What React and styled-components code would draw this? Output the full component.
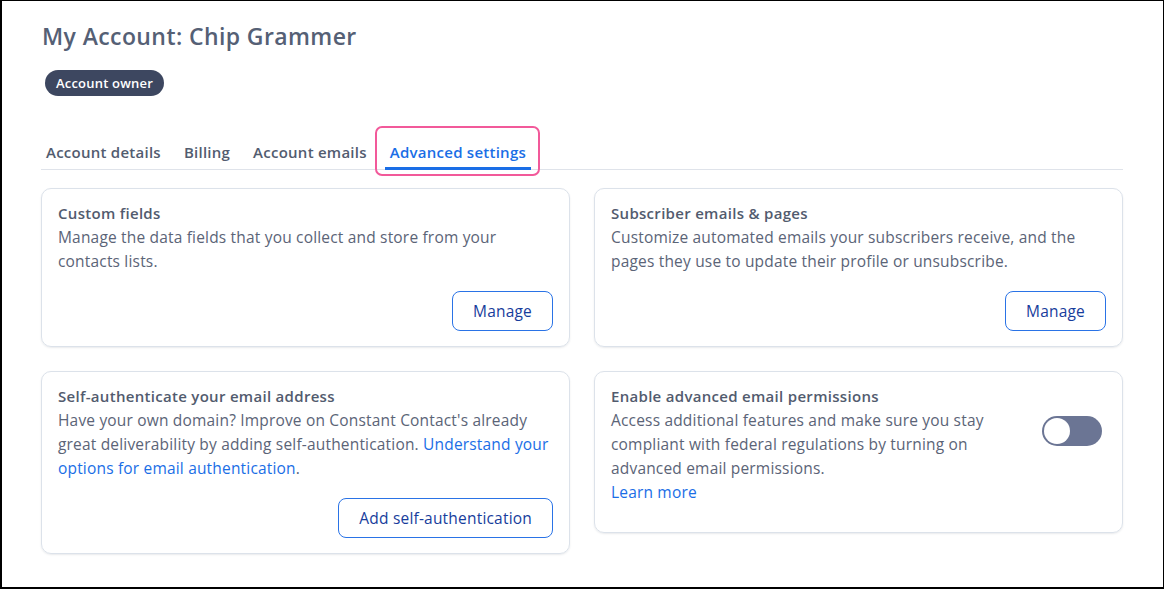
import React from 'react'
import styled, { createGlobalStyle } from 'styled-components'

const GlobalStyle = createGlobalStyle`
  html, body {
    margin: 0;
    padding: 0;
    background: #ffffff;
  }
  body {
    font-family: "Open Sans", "Liberation Sans", sans-serif;
  }
  * {
    box-sizing: border-box;
  }
`;

const Frame = styled.div`
  width: 1164px;
  height: 589px;
  border-top: 1px solid #000;
  border-left: 2px solid #000;
  border-right: 1px solid #000;
  border-bottom: 2px solid #000;
  padding: 20px 40px 0 39px;
  background: #fff;
`;

const Title = styled.h1`
  margin: 0;
  font-size: 23px;
  line-height: 30px;
  font-weight: 600;
  letter-spacing: 0.4px;
  color: #556075;
  padding-left: 1px;
`;

const Badge = styled.span`
  display: inline-flex;
  align-items: center;
  height: 26px;
  margin: 19px 0 0 4px;
  padding: 0 11px;
  border-radius: 13px;
  background: #3d4760;
  color: #fff;
  font-size: 13px;
  font-weight: 600;
  letter-spacing: 0.2px;
`;

const TabBar = styled.div`
  display: flex;
  gap: 13px;
  margin-top: 38px;
  box-shadow: inset 0 -1px 0 #dfe3ea;
`;

const Tab = styled.div`
  position: relative;
  padding: 8px 5px 5px;
  line-height: 20px;
  font-size: 15px;
  font-weight: 600;
  letter-spacing: 0.25px;
  color: ${p => (p.$active ? '#1a6ee6' : '#525c6f')};
  border-bottom: 3px solid ${p => (p.$active ? '#1a6ee6' : 'transparent')};
`;

const Highlight = styled.span`
  position: absolute;
  left: -10px;
  right: -9px;
  top: -8px;
  bottom: -9px;
  border: 2px solid #f2599a;
  border-radius: 7px;
  pointer-events: none;
`;

const Grid = styled.div`
  display: grid;
  grid-template-columns: 1fr 1fr;
  gap: 24px;
  margin-top: 18px;
  align-items: start;
`;

const Card = styled.div`
  border: 1px solid #dce2ea;
  border-radius: 10px;
  box-shadow: 0 1px 2px rgba(40, 50, 70, 0.1);
  padding: 12px 16px ${p => p.$padBottom || 15}px;
  display: flex;
  flex-direction: column;
`;

const CardRow = styled.div`
  display: flex;
  justify-content: space-between;
  align-items: flex-start;
`;

const TextCol = styled.div`
  width: ${p => p.$width || 'auto'};
`;

const CardTitle = styled.div`
  font-size: 15px;
  line-height: 24px;
  font-weight: 600;
  letter-spacing: 0.3px;
  color: #525b6e;
`;

const CardText = styled.p`
  margin: 0;
  font-size: 15.5px;
  line-height: 24px;
  letter-spacing: 0.18px;
  color: #5b6477;
`;

const InlineLink = styled.a`
  color: #1a6ee6;
  text-decoration: none;
`;

const BlockLink = styled.a`
  display: block;
  color: #1a6ee6;
  text-decoration: none;
  font-size: 15.5px;
  line-height: 24px;
  letter-spacing: 0.18px;
`;

const Actions = styled.div`
  display: flex;
  justify-content: flex-end;
  margin-top: 18px;
`;

const OutlineButton = styled.button`
  height: 40px;
  padding: 0 20px;
  border: 1px solid #2a73e6;
  border-radius: 8px;
  background: #fff;
  color: #173d9c;
  font-family: "Open Sans", "Liberation Sans", sans-serif;
  font-size: 15.5px;
  font-weight: 500;
  letter-spacing: 0.2px;
`;

const Toggle = styled.div`
  position: relative;
  width: 60px;
  height: 30px;
  margin: 32px 4px 0 0;
  border-radius: 15px;
  background: #6b7594;
  flex-shrink: 0;
`;

const Knob = styled.span`
  position: absolute;
  left: 2px;
  top: 2px;
  width: 26px;
  height: 26px;
  border-radius: 50%;
  background: #fff;
`;

export default function App() {
  return (
    <>
      <GlobalStyle />
      <Frame>
        <Title>My Account: Chip Grammer</Title>
        <Badge>Account owner</Badge>

        <TabBar>
          <Tab>Account details</Tab>
          <Tab>Billing</Tab>
          <Tab>Account emails</Tab>
          <Tab $active>
            Advanced settings
            <Highlight />
          </Tab>
        </TabBar>

        <Grid>
          <Card>
            <CardTitle>Custom fields</CardTitle>
            <CardText>
              Manage the data fields that you collect and store from your contacts lists.
            </CardText>
            <Actions>
              <OutlineButton>Manage</OutlineButton>
            </Actions>
          </Card>

          <Card>
            <CardTitle>Subscriber emails &amp; pages</CardTitle>
            <CardText>
              Customize automated emails your subscribers receive, and the pages they use to update their profile or unsubscribe.
            </CardText>
            <Actions>
              <OutlineButton>Manage</OutlineButton>
            </Actions>
          </Card>

          <Card>
            <CardTitle>Self-authenticate your email address</CardTitle>
            <CardText>
              Have your own domain? Improve on Constant Contact's already great deliverability by adding self-authentication.{' '}
              <InlineLink href="#">Understand your options for email authentication</InlineLink>.
            </CardText>
            <Actions>
              <OutlineButton>Add self-authentication</OutlineButton>
            </Actions>
          </Card>

          <Card $padBottom={28}>
            <CardRow>
              <TextCol $width="400px">
                <CardTitle>Enable advanced email permissions</CardTitle>
                <CardText>
                  Access additional features and make sure you stay compliant with federal regulations by turning on advanced email permissions.
                </CardText>
                <BlockLink href="#">Learn more</BlockLink>
              </TextCol>
              <Toggle>
                <Knob />
              </Toggle>
            </CardRow>
          </Card>
        </Grid>
      </Frame>
    </>
  )
}
